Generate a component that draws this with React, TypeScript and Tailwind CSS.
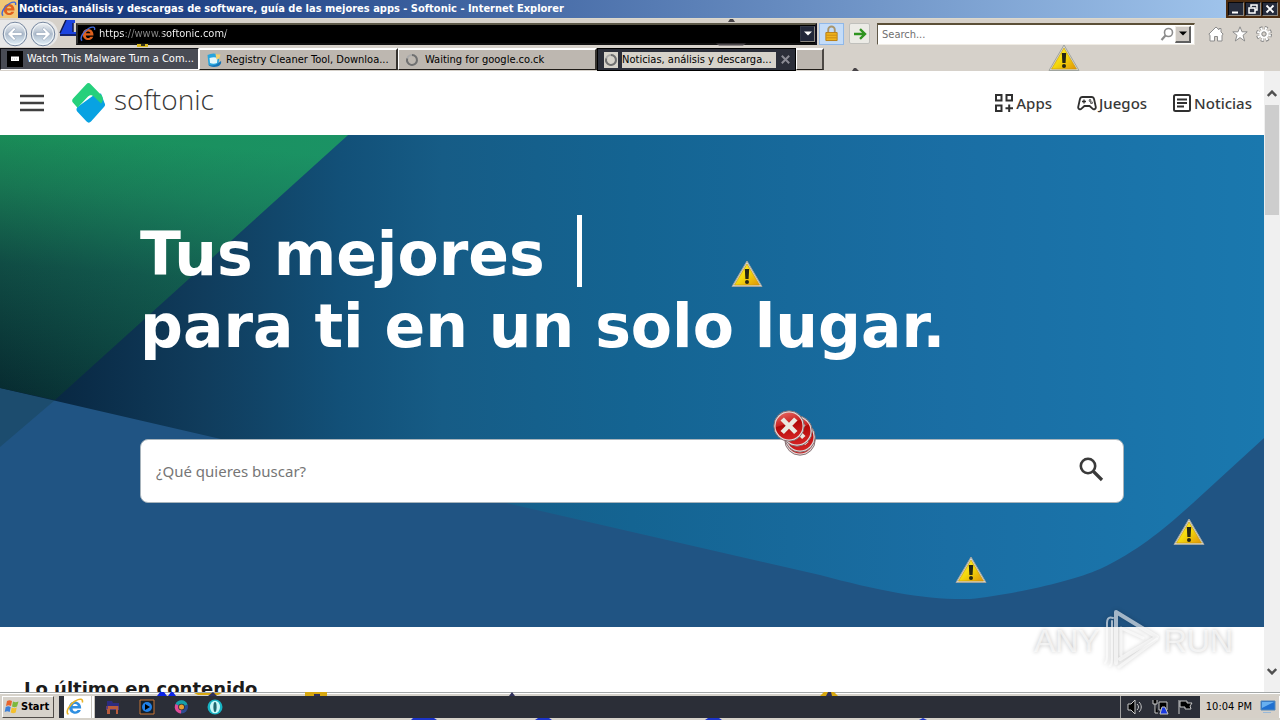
import React from "react";

const UI = "font-['DejaVu_Sans_Condensed','DejaVu_Sans',sans-serif]";

function IeIcon({ className = "", dark = false }: { className?: string; dark?: boolean }) {
  return (
    <svg viewBox="0 0 16 16" className={className} aria-hidden="true">
      <path d="M13.500 9.400H5.800c.1 3 3.600 3.200 4.500 1.300h2.900c-1.700 5-10.500 4.600-10.500-2.400 0-7 11-7.200 10.800 1.100zM5.900 7.200h4.500c-.2-2.300-4.100-2.400-4.500 0z" fill={dark ? "#e0601c" : "#2f8fe0"} />
      <path d="M2.200 14.500C-1 13 3 5.500 8.500 2.500 12.500.2 15.500.8 14.500 4" fill="none" stroke={dark ? "#4068d8" : "#e8b428"} strokeWidth="1.400" />
    </svg>
  );
}

function Warning({ className }: { className: string }) {
  return (
    <svg viewBox="0 0 32 28" className={className} aria-hidden="true">
      <defs>
        <linearGradient id="warn" x1="0" y1="0" x2="1" y2="1">
          <stop offset="0" stopColor="#fff040" />
          <stop offset="0.5" stopColor="#f4d80c" />
          <stop offset="1" stopColor="#e09408" />
        </linearGradient>
      </defs>
      <path d="M16 1 31 26.500H1z" fill="#d8d8cc" stroke="#a0a4a0" strokeWidth="1" strokeLinejoin="round" />
      <path d="M16 4 28.500 25h-25z" fill="url(#warn)" stroke="#c8960c" strokeWidth=".6" />
      <path d="M13.800 9h4.400l-.6 10h-3.200z" fill="#262614" />
      <circle cx="16" cy="22" r="2" fill="#262614" />
    </svg>
  );
}

function ErrorDisc({ className, cross = true }: { className: string; cross?: boolean }) {
  return (
    <svg viewBox="0 0 32 32" className={className} aria-hidden="true">
      <defs>
        <linearGradient id="err" x1="0" y1="0" x2="0.300" y2="1">
          <stop offset="0" stopColor="#e87068" />
          <stop offset="0.480" stopColor="#cc2424" />
          <stop offset="0.520" stopColor="#b00808" />
          <stop offset="1" stopColor="#d02020" />
        </linearGradient>
      </defs>
      <circle cx="16" cy="16" r="15.200" fill="#e4dcdc" stroke="#7c6468" strokeWidth=".9" />
      <circle cx="16" cy="16" r="13.500" fill="url(#err)" />
      {cross && <path d="m7.500 10.500 3.400-3 5.100 5.200L21.100 7.500l3.400 3-5.200 5.300 5.200 5.200-3.400 3-5.100-5.200-5.100 5.200-3.400-3 5.200-5.200z" fill="#ebe8e0" />}
    </svg>
  );
}

function Spinner() {
  return (
    <svg viewBox="0 0 14 14" className="size-[14px] shrink-0" aria-hidden="true">
      <circle cx="7" cy="7" r="5" fill="none" stroke="#aaa" strokeWidth="2" />
      <path d="M7 2a5 5 0 1 1-4.800 3.500" fill="none" stroke="#707070" strokeWidth="2" />
    </svg>
  );
}

function TitleBar() {
  return (
    <header className="flex h-[18px] shrink-0 items-center bg-linear-to-r from-[#0c2c74] to-[#a6caf0]">
      <span className="flex h-full w-[18px] items-center justify-center bg-[#f0c878]">
        <IeIcon dark className="size-4" />
      </span>
      <h1 className="grow truncate pl-px text-[11px] leading-[18px] font-bold text-white">
        Noticias, análisis y descargas de software, guía de las mejores apps - Softonic - Internet Explorer
      </h1>
      <div className="flex h-full items-center gap-px bg-[#4c2c10] px-[2px]">
        {["Minimizar", "Restaurar", "Cerrar"].map((label, i) => (
          <button key={label} aria-label={label} className="flex h-[14px] w-4 items-center justify-center border border-r-[#8c8880] border-b-[#8c8880] border-t-[#08080c] border-l-[#08080c] bg-[#262c3c]">
            <svg viewBox="0 0 10 10" className="size-[10px]" fill="none" stroke="#fff" strokeWidth="1.500">
              {i === 0 && <path d="M1 8.500h6" strokeWidth="2" />}
              {i === 1 && <path d="M3 3V1h6v5H7M1 4h6v5H1z" />}
              {i === 2 && <path d="m1.500 1.500 7 7m0-7-7 7" strokeWidth="1.800" />}
            </svg>
          </button>
        ))}
      </div>
    </header>
  );
}

function RoundArrow({ label, flip = false }: { label: string; flip?: boolean }) {
  return (
    <button aria-label={label} className="size-[26px]">
      <svg viewBox="0 0 26 26" className={flip ? "size-[26px] -scale-x-100" : "size-[26px]"}>
        <defs>
          <linearGradient id="orb" x1="0" y1="0" x2="0" y2="1">
            <stop offset="0" stopColor="#f2f4f6" />
            <stop offset="0.500" stopColor="#aebccc" />
            <stop offset="1" stopColor="#e4f2fa" />
          </linearGradient>
        </defs>
        <circle cx="13" cy="13" r="11.800" fill="url(#orb)" stroke="#7888a0" strokeWidth="1" />
        <circle cx="13" cy="13" r="10.500" fill="none" stroke="#f4f8fa" strokeWidth="1" />
        <path d="M5.500 13l6.500-6.500 1.800 1.800-3.100 3.100H20v3.200h-9.300l3.100 3.100-1.800 1.800z" fill="#fff" stroke="#8c9cb4" strokeWidth=".6" />
      </svg>
    </button>
  );
}

function Toolbar() {
  return (
    <div className="flex h-[30px] shrink-0 items-center border-t border-[#dcd8cc] pr-2">
      <div className="flex h-[27px] w-[58px] shrink-0 items-center gap-[2px] rounded-r-full bg-[#e8e8e8] pl-[2px]">
        <RoundArrow label="Atrás" />
        <RoundArrow label="Adelante" flip />
      </div>
      <svg viewBox="0 0 18 16" className="mb-3 h-4 w-[18px] shrink-0" aria-hidden="true">
        <path d="M8 0h9v3h-2v9h3v4H2v-3z" fill="#1c44e0" />
        <path d="M2 15h16M15 3v9M8 0 2 13" fill="none" stroke="#10184c" strokeWidth="1.500" />
      </svg>
      <div className="flex h-[22px] grow items-center border-2 border-t-[#5c5848] border-l-[#303030] border-r-[#101020] border-b-[#101010] bg-black pl-[2px]">
        <IeIcon dark className="size-4 shrink-0" />
        <input
          aria-label="Dirección"
          defaultValue="https://www.softonic.com/"
          className="ml-[3px] h-[18px] min-w-0 grow bg-[linear-gradient(90deg,#fff_0_25px,#8a8a8a_25px_64px,#fff_64px_127px,#8a8a8a_127px)] bg-clip-text text-[11px] text-transparent outline-none"
        />
        <button aria-label="Mostrar direcciones" className="flex h-4 w-[15px] items-center justify-center border border-r-[#8c8880] border-b-[#8c8880] border-[#303644] bg-[#22283a]">
          <svg viewBox="0 0 8 5" className="h-[5px] w-2"><path d="M0 .5h8L4 4.500z" fill="#fff" /></svg>
        </button>
      </div>
      <button aria-label="Informe de seguridad" className="ml-[2px] flex h-[22px] w-[25px] items-center justify-center border border-[#90b8e8] bg-[#c4dcf8]">
        <svg viewBox="0 0 16 18" className="h-[17px] w-[15px]">
          <path d="M4.500 8V5a3.500 3.500 0 0 1 7 0v3" fill="none" stroke="#a8956c" strokeWidth="2" />
          <path d="M2 8h12v8.500H2z" fill="#f0b41c" stroke="#b87c10" />
          <path d="M2.500 10.800h11M2.500 13.600h11" stroke="#c88a14" />
        </svg>
      </button>
      <button aria-label="Ir a" className="ml-[5px] flex size-[21px] items-center justify-center rounded-xs border border-[#c0c0bc] bg-[#ecebe6]">
        <svg viewBox="0 0 14 12" className="h-3 w-[14px]" fill="none" stroke="#2f9420" strokeWidth="2.400"><path d="M1 6h10.500M7 1.200 12 6l-5 4.800" /></svg>
      </button>
      <div className="ml-[7px] flex h-[22px] w-[318px] shrink-0 items-center border border-t-2 border-t-[#5c5038] border-l-[#605848] border-r-[#e8e4dc] border-b-[#f0ece4] bg-white pr-[3px] pl-1">
        <input aria-label="Buscar" placeholder="Search..." className="h-[18px] min-w-0 grow text-[11px] outline-none placeholder:text-[#707070]" />
        <button aria-label="Buscar en la web" className="mr-px">
          <svg viewBox="0 0 14 14" className="size-[14px]" fill="none" stroke="#8c8c8c"><circle cx="8.500" cy="5.500" r="4" strokeWidth="1.600" /><path d="M5.500 8.500 1.500 13" strokeWidth="2.200" /></svg>
        </button>
        <button aria-label="Opciones de búsqueda" className="flex h-[17px] w-4 items-center justify-center border border-[#f0ece4] border-r-2 border-r-[#606060] border-b-2 border-b-[#606060] bg-[#cfcac4]">
          <svg viewBox="0 0 8 5" className="h-[5px] w-2"><path d="M0 .5h8L4 4.500z" fill="#000" /></svg>
        </button>
      </div>
      <nav className="ml-[13px] flex shrink-0 items-center gap-2 pt-px">
        <button aria-label="Inicio"><svg viewBox="0 0 16 16" className="size-4" fill="#fff" stroke="#8c8c8c" strokeLinejoin="round"><path d="M8 1 .8 8.200 2 9.200V15h4.500v-4.500h3V15H14V9.200l1.200-1L13 6V2.500h-2v1.300z" /></svg></button>
        <button aria-label="Favoritos"><svg viewBox="0 0 16 16" className="size-4" fill="#fff" stroke="#8c8c8c" strokeLinejoin="round"><path d="m8 .8 2 5h5.200L11 9.300l1.700 5.700L8 11.600 3.300 15 5 9.300.8 5.800H6z" /></svg></button>
        <button aria-label="Herramientas">
          <svg viewBox="0 0 16 16" className="size-4">
            <circle cx="8" cy="8" r="6" fill="none" stroke="#848484" strokeWidth="4" strokeDasharray="2.700 2.012" />
            <circle cx="8" cy="8" r="5.700" fill="none" stroke="#fff" strokeWidth="2.600" strokeDasharray="1.900 2.577" strokeDashoffset="-.350" />
            <circle cx="8" cy="8" r="4.600" fill="#fff" />
            <circle cx="8" cy="8" r="2.200" fill="#d6d1ca" stroke="#848484" />
          </svg>
        </button>
      </nav>
    </div>
  );
}

function Tabs() {
  const light = "flex h-[22px] w-[199px] items-center gap-1 border-t-2 border-l border-r-2 border-b border-t-[#fff] border-l-[#fff] border-r-[#35322e] border-b-[#201c18] bg-[#bdb7b0] pl-[6px] text-black";
  return (
    <div role="tablist" className="flex h-[23px] shrink-0 text-[11px] leading-4">
      <button role="tab" className="flex h-[22px] w-[199px] items-center gap-1 border border-t-[#101014] border-l-[#101014] border-r-white border-b-white bg-[#484b54] pl-[6px] text-white">
        <svg viewBox="0 0 16 16" className="size-4 shrink-0"><path d="M0 0h16v16H0z" /><path d="M4 5.500h8v4.500H4z" fill="#fff" /><path d="M5 8h6" stroke="#999" strokeDasharray="1 1" strokeWidth=".6" /></svg>
        <span>Watch This Malware Turn a Com...</span>
      </button>
      <button role="tab" className={light}>
        <svg viewBox="0 0 16 16" className="size-4 shrink-0">
          <path d="M1.500 3c4-2 8-2 12 0l-1 9.500c-3 2-7 2-10 0z" fill="#28a4dc" />
          <path d="M3.500 6c3-1 6-1 8 0l-.5 5c-2 1-5 1-7 0z" fill="#e4f8fc" />
          <path d="M9.500 2l5 .5-1 4-3 1z" fill="#f4d070" />
          <path d="M2 12.500c4 1.500 7 1 9-.5l4-3c1 3-2 6-7 6-3 0-5-1-6-2.500z" fill="#1474b8" />
        </svg>
        <span>Registry Cleaner Tool, Downloa...</span>
      </button>
      <button role="tab" className={light}><Spinner /><span className="ml-[2px]">Waiting for google.co.ck</span></button>
      <div role="tab" aria-selected="true" className="flex h-[23px] w-[199px] items-center border border-black bg-[#2b2e39] pl-[6px] text-black">
        <span className="flex size-4 items-center justify-center bg-[#d6d2ca]"><Spinner /></span>
        <span className="ml-1 h-4 grow bg-[#d6d2ca] pr-1 whitespace-nowrap">Noticias, análisis y descarga...</span>
        <button aria-label="Cerrar pestaña" className="flex w-[22px] justify-center">
          <svg viewBox="0 0 9 9" className="size-[9px]" stroke="#8b8b94" strokeWidth="2"><path d="m.8.8 7.400 7.400m0-7.400L.8 8.200" /></svg>
        </button>
      </div>
      <button aria-label="Nueva pestaña" className="h-[22px] w-7 border-t-2 border-l border-r-2 border-b border-t-white border-l-white border-r-[#4c4844] border-b-[#201c18] bg-[#bdb7b0]" />
    </div>
  );
}

function SiteHeader() {
  const link = "flex items-center gap-[2px] text-[15px] leading-6 font-medium text-[#383838]";
  return (
    <header className="flex h-16 shrink-0 items-center bg-white pr-3 pl-5">
      <button aria-label="Menú">
        <svg viewBox="0 0 24 18" className="h-[18px] w-6" stroke="#404040" strokeWidth="2.400"><path d="M0 2h24M0 9h24M0 16h24" /></svg>
      </button>
      <a href="#inicio" className="ml-7 flex items-center gap-2" aria-label="softonic">
        <svg viewBox="0 0 34 40" className="h-10 w-[34px]">
          <path d="M5.200 24.200 22 12l7-1.500 3.500 9.500c.8 1.200.8 2.500-.3 3.700L19 38.600c-1.400 1.500-3 1.500-4.400 0L5.200 28.600c-1-1.200-1-2.900 0-4.400z" fill="#08a2e2" />
          <path d="M14.300 1.200 1.100 15.600c-1.200 1.300-1.200 2.700-.2 4l4.600 5.200L15.500 14c2.200-2.300 4.600-2.200 6.800 0l6.700 6.500c2.600-2.500 2.200-6.200.4-8.300L18.700 1.200c-1.400-1.500-3-1.500-4.400 0z" fill="#26d07c" />
        </svg>
        <span className="pb-2 font-['Open_Sans','Noto_Sans',sans-serif] text-[28px] leading-8 font-light text-[#383838]">softonic</span>
      </a>
      <nav className="ml-auto flex gap-[25px] font-['Noto_Sans','Open_Sans',sans-serif]">
        <a href="#apps" className={link}>
          <svg viewBox="0 0 20 20" className="size-5" fill="none" stroke="#303030" strokeWidth="2"><path d="M2 2h5.500v5.500H2zM12.500 2H18v5.500h-5.500zM2 12.500h5.500V18H2zM15.200 11.500v7.500M11.500 15.200H19" /></svg>
          Apps
        </a>
        <a href="#juegos" className={link}>
          <svg viewBox="0 0 20 20" className="size-5" fill="none" stroke="#303030" strokeWidth="1.800" strokeLinejoin="round"><path d="M5.500 4h9c1.500 0 2.300.8 2.600 2.200L18.800 14c.3 2-2 3-3.300 1.700L12.600 13H7.400l-2.900 2.700C3.200 17 .9 16 1.200 14l1.700-7.800C3.200 4.800 4 4 5.500 4z" /><path d="M7 6.500v4M5 8.500h4" strokeWidth="1.300" /><circle cx="13" cy="7.500" r=".4" /><circle cx="14.500" cy="9.800" r=".4" /></svg>
          Juegos
        </a>
        <a href="#noticias" className={link}>
          <svg viewBox="0 0 20 20" className="size-5" fill="none" stroke="#303030" strokeWidth="2"><rect x="2" y="2" width="16" height="16" rx="1.500" /><path d="M5 6.500h10M5 10h10M5 13.500h7" strokeWidth="1.800" /></svg>
          Noticias
        </a>
      </nav>
    </header>
  );
}

function Hero() {
  return (
    <section className="relative isolate shrink-0 bg-[#205483] px-[140px] pt-20 pb-[124px]">
      <svg viewBox="0 0 1264 492" preserveAspectRatio="none" className="absolute inset-0 -z-10 h-full w-full" aria-hidden="true">
        <defs>
          <linearGradient id="sea" gradientUnits="userSpaceOnUse" x1="0" y1="0" x2="1264" y2="0">
            <stop offset="0" stopColor="#06213a" />
            <stop offset="0.070" stopColor="#0a2c48" />
            <stop offset="0.160" stopColor="#103c5c" />
            <stop offset="0.270" stopColor="#125078" />
            <stop offset="0.350" stopColor="#165c86" />
            <stop offset="0.500" stopColor="#146492" />
            <stop offset="0.750" stopColor="#1a6ea4" />
            <stop offset="1" stopColor="#1a78ae" />
          </linearGradient>
          <linearGradient id="leaf" gradientUnits="userSpaceOnUse" x1="60" y1="0" x2="40" y2="265">
            <stop offset="0" stopColor="#1a8e58" />
            <stop offset="0.200" stopColor="#187652" />
            <stop offset="0.500" stopColor="#104c44" />
            <stop offset="1" stopColor="#072a30" />
          </linearGradient>
          <linearGradient id="tint" gradientUnits="userSpaceOnUse" x1="0" y1="0" x2="348" y2="0">
            <stop offset="0" stopColor="#1c9a78" stopOpacity="0" />
            <stop offset="1" stopColor="#1c9a78" stopOpacity=".4" />
          </linearGradient>
        </defs>
        <path d="M0 253 55 265 0 312z" fill="#1c4c6e" />
        <path d="M0 0H1264V303L1193 368C1165 393 1140 415 1100 434C1070 447 1010 460 970 464C925 465 880 456 820 440L506 368 212 302 0 253z" fill="url(#sea)" />
        <path d="M0 0H348L55 265 0 253z" fill="url(#leaf)" />
        <path d="M0 0H348L55 265 0 253z" fill="url(#tint)" />
      </svg>
      <h2 className="font-['DejaVu_Sans',sans-serif] text-[60px] leading-[78px] font-bold text-white">
        <span className="flex h-[72px]">Tus mejores<span className="ml-8 h-full w-[5px] bg-white" /></span>
        <span className="block h-[72px]">para ti en un solo lugar.</span>
      </h2>
      <form className="mt-20 flex h-16 items-center rounded-lg border border-[#a8b4bc] bg-white pr-4 pl-[15px]" onSubmit={(e) => e.preventDefault()}>
        <input aria-label="¿Qué quieres buscar?" placeholder="¿Qué quieres buscar?" className="h-10 min-w-0 grow font-['Noto_Sans','Open_Sans',sans-serif] text-[15px] outline-none placeholder:text-[#767676]" />
        <button aria-label="Buscar" className="flex size-8 items-center justify-center">
          <svg viewBox="0 0 26 26" className="mb-1 size-[26px]" fill="none" stroke="#3a3a3a"><circle cx="10" cy="10" r="7.200" strokeWidth="2.600" /><path d="m15.500 15.500 8.500 8.500" strokeWidth="3.200" /></svg>
        </button>
      </form>
    </section>
  );
}

function ScrollBar() {
  return (
    <div className="flex w-4 shrink-0 flex-col items-center bg-[#f0f0f0]">
      <button aria-label="Subir" className="flex h-[34px] w-full items-end justify-center pb-2">
        <svg viewBox="0 0 10 7" className="h-[7px] w-[10px]" fill="none" stroke="#505050" strokeWidth="2.400"><path d="m.8 6 4.200-4.400L9.200 6" /></svg>
      </button>
      <div className="h-[110px] w-[14px] bg-[#cdcdcd]" />
      <button aria-label="Bajar" className="mt-auto flex h-7 w-full items-start justify-center pt-1">
        <svg viewBox="0 0 10 7" className="h-[7px] w-[10px]" fill="none" stroke="#505050" strokeWidth="2.400"><path d="m.8 1 4.200 4.400L9.200 1" /></svg>
      </button>
    </div>
  );
}

function Watermark() {
  return (
    <div className="absolute right-[47px] bottom-[19px] flex items-center gap-1 font-['Liberation_Sans_Narrow','Liberation_Sans',sans-serif] text-[32px] leading-[64px] text-white/60 [text-shadow:0_0_4px_rgb(0_0_0/0.25)]">
      <span>ANY</span>
      <svg viewBox="0 0 56 64" className="h-16 w-14 drop-shadow-[0_0_2px_rgba(0,0,0,0.3)]" fill="none" stroke="#fff" strokeOpacity=".6" strokeWidth="4" strokeLinejoin="round" strokeLinecap="round" aria-hidden="true">
        <path d="M12 54V3L53 28 16 50" />
        <path d="M17 46V19l22 10M53 30 15 58" strokeWidth="3" />
        <path d="M9 9C4 7 3 11 3 14v34c0 3-1 5-2 6M8 12v38c0 4-1 6-2 7" strokeWidth="2" />
      </svg>
      <span>RUN</span>
    </div>
  );
}

function Taskbar() {
  return (
    <footer className="relative flex h-7 shrink-0 border-t border-[#a4a8a8] bg-[#d6d2ca] pb-[2px]">
      <div className="flex grow border-t border-white pt-[2px]">
        <button className="ml-[2px] flex h-[22px] w-[52px] items-center gap-px border border-t-white border-l-white border-r-[#504c48] border-b-[#504c48] bg-[#d6d2ca] pl-px text-[11px] font-bold text-black">
          <svg viewBox="0 0 16 16" className="size-4 shrink-0"><path d="M3 2c2-1 3-1 5 0L7 7C5 6 4 6 2 7z" fill="#e8642c" /><path d="M9 2.500c2 1 3 1 5.500 0L13 7.500c-2 1-3 1-5 0z" fill="#7cb83c" /><path d="M1.700 8c2-1 3-1 5 0l-1 5c-2-1-3-1-5 0z" fill="#3c80d8" /><path d="M7.700 8.500c2 1 3 1 5 0l-1 5c-2 1-3 1-5 0z" fill="#f4c02c" /></svg>
          Start
        </button>
        <div className="ml-[5px] flex grow items-center bg-[#2b2e37]">
          <button aria-label="Internet Explorer" className="ml-[5px] flex h-full w-[31px] items-center border-r-4 border-double border-[#c8c4bc] bg-white pl-[2px]"><IeIcon className="size-[18px]" /></button>
          <button aria-label="Explorador" className="ml-[10px]"><svg viewBox="0 0 16 16" className="size-4"><path d="M2 2h5l1 2h6v4H2z" fill="#2c2c80" /><path d="M1 7h13v4H1z" fill="#5c3c78" /><path d="M3 7h10v3H3zM2 10h3v5H2zM11 10h2v5h-2z" fill="#b85c3c" /></svg></button>
          <button aria-label="Reproductor" className="ml-[18px]"><svg viewBox="0 0 16 16" className="size-4"><path d="M1 1h14v14H1z" fill="#14202c" stroke="#c87434" /><circle cx="8" cy="8" r="5" fill="#2080e8" /><path d="M6 5v6l5-3z" /></svg></button>
          <button aria-label="Chrome" className="ml-[18px]"><svg viewBox="0 0 16 16" className="size-4"><circle cx="8.500" cy="8" r="6.500" fill="#2c4c90" /><path d="M8.500 8 2.500 5A6.500 6.500 0 0 1 14.500 5.500z" fill="#18a0a8" /><path d="M8.500 8 2.500 5A6.500 6.500 0 0 0 8 14.500z" fill="#e04c98" /><circle cx="8.500" cy="8" r="3.300" fill="#2b2e37" /><circle cx="8.500" cy="8" r="2.500" fill="#e8a030" /></svg></button>
          <button aria-label="Opera" className="ml-[18px]"><svg viewBox="0 0 16 16" className="size-4"><circle cx="8" cy="8" r="7.500" fill="#18b4c4" /><ellipse cx="8" cy="8" rx="5" ry="6.300" fill="#c8f8f8" /><ellipse cx="8" cy="8" rx="1.600" ry="5" fill="#206870" /></svg></button>
          <div className="ml-auto flex h-full items-center gap-2 border-l border-[#a0a0a0] px-[6px]">
            <svg viewBox="0 0 17 16" className="h-4 w-[17px]" stroke="#c8c8c8" fill="none"><path d="M1 5h3l4-4v14l-4-4H1z" fill="#000" /><path d="M10 5c2 2 2 4 0 6M12 3c3 3 3 7 0 10" /></svg>
            <svg viewBox="0 0 17 16" className="h-4 w-[17px]" stroke="#c8c8c8" fill="#000"><path d="M1 1v4h4V1M3 5v9h3M7 3h8v8H7z" /><path d="m8 15 2-7h3l3 7z" fill="#1838e0" /></svg>
            <svg viewBox="0 0 17 16" className="h-4 w-[17px]" stroke="#c8c8c8" fill="#000"><path d="M2 15V1M3 2h7v2h5l-2 3 1 3H8V8H3z" /></svg>
          </div>
        </div>
        <div className="flex items-center gap-2 border-r border-white bg-[#d6d0c8] pr-[3px] pl-[6px] text-[11px] text-black">
          <time className="whitespace-nowrap">10:04 PM</time>
          <svg viewBox="0 0 16 14" className="h-[14px] w-4" aria-label="Escritorio"><path d="M1 1h14v9H1z" fill="#2070d0" stroke="#5488b8" /><path d="M2 2h12L2 8z" fill="#68b0f0" /><path d="M3 12.500h8" stroke="#98b8d8" /></svg>
        </div>
      </div>
      <svg viewBox="0 0 1280 28" preserveAspectRatio="none" className="pointer-events-none absolute inset-x-0 -top-px h-7 w-full" aria-hidden="true">
        <path d="M157 4l3-4h4l3 4zM168 4l3-4h2l3 4z" fill="#0c24e8" />
        <path d="M194 1h28l-4 2h-20zM305 0h22v4h-22zM820 4l4-4h10l4 4z" fill="#d8a810" />
        <path d="M208 4l5-4 4 4zM314 2h6v2h-6zM474 4l3-4 3 4zM826 4l2-4h3l1 4z" fill="#30305c" opacity="0" />
        <path d="M208 4l5-4 4 4zM314 2h6v2h-6zM509 4l3-4 3 4zM826 4l2-4h3l1 4z" fill="#30305c" />
        <path d="M411 28l2-2h21l3 2zM535 28l3-2h11l3 2zM705 28l3-2h11l3 2zM919 28l4-2 4 2z" fill="#1c34c8" />
      </svg>
    </footer>
  );
}

export default function App() {
  return (
    <div className={`relative flex h-screen flex-col overflow-hidden bg-[#d6d1ca] ${UI}`}>
      <TitleBar />
      <Toolbar />
      <Tabs />
      <div className="relative flex min-h-0 grow">
        <main className="flex min-w-0 grow flex-col overflow-hidden bg-white">
          <SiteHeader />
          <Hero />
          <h3 className="px-6 pt-[50px] font-['DejaVu_Sans',sans-serif] text-[18px] leading-6 font-bold whitespace-nowrap text-[#1c1c1c]">Lo último en contenido</h3>
        </main>
        <ScrollBar />
        <Watermark />
      </div>
      <Taskbar />

      <svg viewBox="0 0 1280 72" className="pointer-events-none absolute top-0 left-0 h-[72px] w-[1280px]" aria-hidden="true">
        <path d="M728 22l2-3h3l2 3zM716 43.500h30l-3 2h-24zM852 71l2-3h2l3 3z" fill="#484448" />
        <path d="M137 44h11v3h-11z" fill="#d8b820" />
        <path d="M141 44h4v2h-4z" fill="#303018" />
      </svg>
      <Warning className="absolute top-11 left-[1048px] h-7 w-8" />
      <Warning className="absolute top-[260px] left-[731px] h-7 w-8" />
      <Warning className="absolute top-[518px] left-[1173px] h-7 w-8" />
      <Warning className="absolute top-[556px] left-[955px] h-7 w-8" />
      <ErrorDisc className="absolute top-[424px] left-[784px] size-8" cross={false} />
      <ErrorDisc className="absolute top-[421px] left-[784px] size-8" />
      <ErrorDisc className="absolute top-[415px] left-[781px] size-8" />
      <ErrorDisc className="absolute top-[410px] left-[773px] size-8" />
    </div>
  );
}
